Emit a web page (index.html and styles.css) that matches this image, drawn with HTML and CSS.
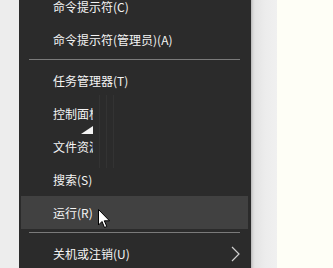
FILE: index.html
```html
<!DOCTYPE html>
<html lang="zh-CN">
<head>
  <meta charset="UTF-8" />
  <meta name="viewport" content="width=device-width, initial-scale=1.0" />
  <title>Win+X 菜单</title>
  <link rel="stylesheet" href="styles.css">
</head>
<body>

  <div class="screen">
    <div class="left-edge"></div>

    <div class="menu">
      <div class="item">命令提示符(C)</div>
      <div class="item">命令提示符(管理员)(A)</div>
      <div class="sep"></div>
      <div class="item">任务管理器(T)</div>
      <div class="item"><span class="cut">控制面板(P)</span></div>
      <div class="item"><span class="cut">文件资源管理器(E)</span></div>
      <div class="item">搜索(S)</div>
      <div class="item active">运行(R)</div>
      <div class="sep"></div>
      <div class="item">
        <span>关机或注销(U)</span>
        <svg class="chevron" width="9" height="16" viewBox="0 0 9 16">
          <path d="M1 1 L8 8 L1 15" fill="none" stroke="#d0d0d0" stroke-width="1.2"/>
        </svg>
      </div>

      <!-- redraw glitch over the two clipped rows -->
      <div class="glitch"></div>
      <svg class="tri" width="12" height="8" viewBox="0 0 12 8">
        <polygon points="0,8 12,0 12,8" fill="#f4f4f4"/>
      </svg>

      <svg class="cursor" width="13" height="20" viewBox="0 0 13 20">
        <path d="M0.5 0.5 L0.5 16 L4 12.5 L6.5 18.5 L8.8 17.5 L6.3 11.8 L11.5 11.8 Z" fill="#fff" stroke="#000" stroke-width="1"/>
      </svg>
    </div>

    <div class="shadow"></div>
    <div class="desktop"></div>
  </div>

</body>
</html>
```

FILE: styles.css
```css
* {
  box-sizing: border-box;
}

body {
  margin: 0;
  font-family: "Noto Sans CJK SC", "Noto Sans", sans-serif;
  font-size: 12px;
  overflow: hidden;
}

.screen {
  display: flex;
  height: 268px;
  overflow: hidden;
}

.left-edge {
  width: 19px;
  background: #ededed;
}

.menu {
  position: relative;
  width: 232px;
  margin-top: -10px;
  background: #2b2b2b;
  color: #f4f4f4;
}

.item {
  display: flex;
  align-items: center;
  justify-content: space-between;
  height: 33px;
  margin: 0 3px 0 2px;
  padding: 0 8px 0 32px;
  white-space: nowrap;
}

.item.active {
  background: #414141;
}

.cut {
  display: block;
  width: 40px;
  overflow: hidden;
}

.sep {
  height: 1px;
  margin: 3px 11px 4px 10px;
  background: #7a7a7a;
}

.glitch {
  position: absolute;
  left: 74px;
  top: 105px;
  width: 27px;
  height: 73px;
  background: repeating-linear-gradient(90deg, #2b2b2b 0, #2b2b2b 6px, #333 6px, #333 7px);
}

.tri {
  position: absolute;
  left: 62px;
  top: 136px;
}

.cursor {
  position: absolute;
  left: 79px;
  top: 219px;
}

.shadow {
  width: 26px;
  background: linear-gradient(90deg, #b8b8b8 0, #d8d8d8 2px, #e4e4e4 4px, #ececec 14px, #f0f0f0 100%);
}

.desktop {
  flex: 1;
  background: #fefef6;
}
```
